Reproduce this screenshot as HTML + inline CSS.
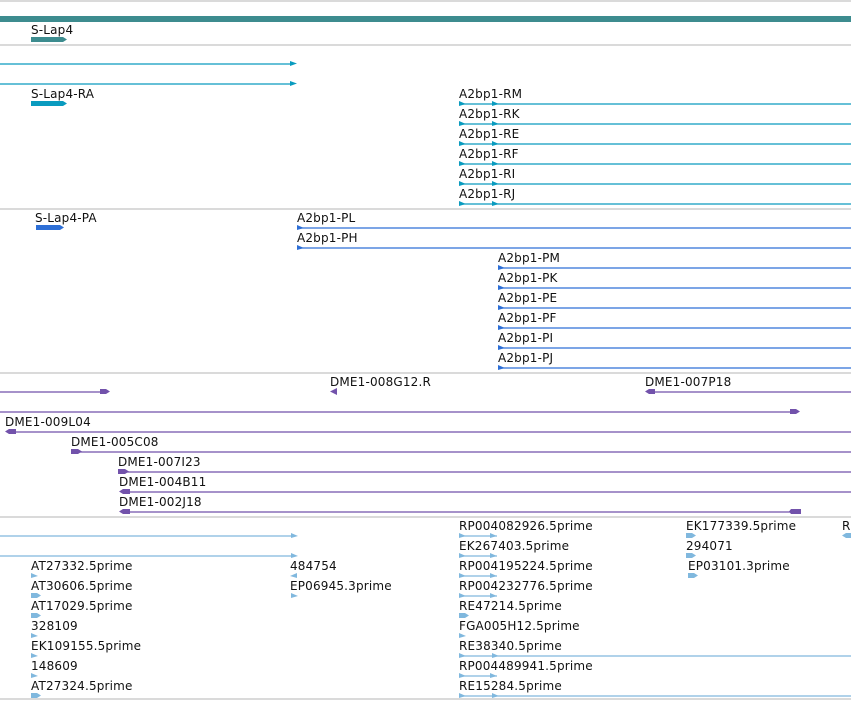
<!DOCTYPE html>
<html><head><meta charset="utf-8"><style>
html,body{margin:0;padding:0;background:#fff;}
svg{display:block;}
text{font-family:"DejaVu Sans","Liberation Sans",sans-serif;font-size:12px;fill:#111;letter-spacing:0.17px;}
</style></head><body>
<svg width="851" height="701" viewBox="0 0 851 701" xmlns="http://www.w3.org/2000/svg">
<defs>
<path id="ra" d="M0,-3 L7,0 L0,2 Z"/>
<path id="la" d="M0,0 L7,-3 L7,2 Z"/>
</defs>
<g stroke="#c3c3c3" stroke-width="1.2">
<line x1="0" y1="1" x2="851" y2="1"/><line x1="0" y1="45" x2="851" y2="45"/>
<line x1="0" y1="209" x2="851" y2="209"/><line x1="0" y1="373" x2="851" y2="373"/>
<line x1="0" y1="517" x2="851" y2="517"/><line x1="0" y1="699" x2="851" y2="699"/>
</g>
<rect x="0" y="16" width="851" height="6" fill="#3d8c8f"/>
<text x="31" y="34">S-Lap4</text>
<path d="M31,37 H63 L67,39.5 L63,42 H31 Z" fill="#3d8c8f"/>
<g stroke="#0a9bbf" stroke-width="1.2" fill="none">
<line x1="0" y1="64" x2="291" y2="64"/><line x1="0" y1="84" x2="291" y2="84"/>
<line x1="459" y1="104" x2="851" y2="104"/><line x1="459" y1="124" x2="851" y2="124"/>
<line x1="459" y1="144" x2="851" y2="144"/><line x1="459" y1="164" x2="851" y2="164"/>
<line x1="459" y1="184" x2="851" y2="184"/><line x1="459" y1="204" x2="851" y2="204"/>
</g>
<g fill="#0a9bbf">
<path d="M290,61 L297,63.5 L290,66 Z"/><path d="M290,81 L297,83.5 L290,86 Z"/>
<path d="M31,101 H63 L67,103.5 L63,106 H31 Z"/>
<use href="#ra" x="459" y="104"/><use href="#ra" x="492" y="104"/>
<use href="#ra" x="459" y="124"/><use href="#ra" x="492" y="124"/>
<use href="#ra" x="459" y="144"/><use href="#ra" x="492" y="144"/>
<use href="#ra" x="459" y="164"/><use href="#ra" x="492" y="164"/>
<use href="#ra" x="459" y="184"/><use href="#ra" x="492" y="184"/>
<use href="#ra" x="459" y="204"/><use href="#ra" x="492" y="204"/>
</g>
<text x="31" y="98">S-Lap4-RA</text>
<text x="459" y="98">A2bp1-RM</text><text x="459" y="118">A2bp1-RK</text>
<text x="459" y="138">A2bp1-RE</text><text x="459" y="158">A2bp1-RF</text>
<text x="459" y="178">A2bp1-RI</text><text x="459" y="198">A2bp1-RJ</text>
<g stroke="#2e6fd6" stroke-width="1.2">
<line x1="297" y1="228" x2="851" y2="228"/><line x1="297" y1="248" x2="851" y2="248"/>
<line x1="498" y1="268" x2="851" y2="268"/><line x1="498" y1="288" x2="851" y2="288"/>
<line x1="498" y1="308" x2="851" y2="308"/><line x1="498" y1="328" x2="851" y2="328"/>
<line x1="498" y1="348" x2="851" y2="348"/><line x1="498" y1="368" x2="851" y2="368"/>
</g>
<g fill="#2e6fd6">
<path d="M36,225 H60 L64,227.5 L60,230 H36 Z"/>
<use href="#ra" x="297" y="228"/><use href="#ra" x="297" y="248"/>
<use href="#ra" x="498" y="268"/><use href="#ra" x="498" y="288"/>
<use href="#ra" x="498" y="308"/><use href="#ra" x="498" y="328"/>
<use href="#ra" x="498" y="348"/><use href="#ra" x="498" y="368"/>
</g>
<text x="35" y="222">S-Lap4-PA</text>
<text x="297" y="222">A2bp1-PL</text><text x="297" y="242">A2bp1-PH</text>
<text x="498" y="262">A2bp1-PM</text><text x="498" y="282">A2bp1-PK</text>
<text x="498" y="302">A2bp1-PE</text><text x="498" y="322">A2bp1-PF</text>
<text x="498" y="342">A2bp1-PI</text><text x="498" y="362">A2bp1-PJ</text>
<g stroke="#7252ab" stroke-width="1.2">
<line x1="0" y1="392" x2="102" y2="392"/><line x1="650" y1="392" x2="851" y2="392"/>
<line x1="0" y1="412" x2="792" y2="412"/>
<line x1="8" y1="432" x2="851" y2="432"/><line x1="75" y1="452" x2="851" y2="452"/>
<line x1="122" y1="472" x2="851" y2="472"/><line x1="123" y1="492" x2="851" y2="492"/>
<line x1="123" y1="512" x2="792" y2="512"/>
</g>
<g fill="#7252ab">
<path d="M100,389 H106 L110,391.5 L106,394 H100 Z"/>
<path d="M330,391.5 L337,388 V395 Z"/>
<path d="M645,391.5 L649,389 H655 V394 H649 Z"/>
<path d="M790,409 H796 L800,411.5 L796,414 H790 Z"/>
<path d="M5,431.5 L9,429 H16 V434 H9 Z"/>
<path d="M71,449 H78 L82,451.5 L78,454 H71 Z"/>
<path d="M118,469 H125 L129,471.5 L125,474 H118 Z"/>
<path d="M119,491.5 L123,489 H130 V494 H123 Z"/>
<path d="M119,511.5 L123,509 H130 V514 H123 Z"/>
<path d="M791,509 H801 V514 H791 L789,511.5 Z"/>
</g>
<text x="330" y="386">DME1-008G12.R</text><text x="645" y="386">DME1-007P18</text>
<text x="5" y="426">DME1-009L04</text><text x="71" y="446">DME1-005C08</text>
<text x="118" y="466">DME1-007I23</text><text x="119" y="486">DME1-004B11</text>
<text x="119" y="506">DME1-002J18</text>
<g stroke="#80b8de" stroke-width="1.2">
<line x1="0" y1="536" x2="292" y2="536"/><line x1="0" y1="556" x2="292" y2="556"/>
<line x1="459" y1="536" x2="497" y2="536"/><line x1="459" y1="556" x2="497" y2="556"/>
<line x1="459" y1="576" x2="497" y2="576"/><line x1="459" y1="596" x2="497" y2="596"/>
<line x1="459" y1="656" x2="851" y2="656"/><line x1="459" y1="676" x2="497" y2="676"/>
<line x1="459" y1="696" x2="851" y2="696"/>
</g>
<g fill="#80b8de">
<use href="#ra" x="291" y="536"/><use href="#ra" x="291" y="556"/>
<use href="#ra" x="31" y="576"/><path d="M31,593 H37 L41,595.5 L37,598 H31 Z"/>
<path d="M31,613 H37 L41,615.5 L37,618 H31 Z"/><use href="#ra" x="31" y="636"/>
<use href="#ra" x="31" y="656"/><use href="#ra" x="31" y="676"/>
<path d="M31,693 H37 L41,695.5 L37,698 H31 Z"/>
<use href="#la" x="290" y="576"/><use href="#ra" x="291" y="596"/>
<use href="#ra" x="459" y="536"/><use href="#ra" x="490" y="536"/>
<use href="#ra" x="459" y="556"/><use href="#ra" x="490" y="556"/>
<use href="#ra" x="459" y="576"/><use href="#ra" x="490" y="576"/>
<use href="#ra" x="459" y="596"/><use href="#ra" x="490" y="596"/>
<path d="M459,613 H465 L469,615.5 L465,618 H459 Z"/><use href="#ra" x="459" y="636"/>
<use href="#ra" x="459" y="656"/><use href="#ra" x="492" y="656"/>
<use href="#ra" x="459" y="676"/><use href="#ra" x="490" y="676"/>
<use href="#ra" x="459" y="696"/><use href="#ra" x="492" y="696"/>
<path d="M686,533 H692 L696,535.5 L692,538 H686 Z"/>
<path d="M686,553 H692 L696,555.5 L692,558 H686 Z"/>
<path d="M688,573 H694 L698,575.5 L694,578 H688 Z"/>
<path d="M842,535.5 L846,533 H851 V538 H846 Z"/>
</g>
<text x="31" y="570">AT27332.5prime</text><text x="31" y="590">AT30606.5prime</text>
<text x="31" y="610">AT17029.5prime</text><text x="31" y="630">328109</text>
<text x="31" y="650">EK109155.5prime</text><text x="31" y="670">148609</text>
<text x="31" y="690">AT27324.5prime</text>
<text x="290" y="570">484754</text><text x="290" y="590">EP06945.3prime</text>
<text x="459" y="530">RP004082926.5prime</text><text x="459" y="550">EK267403.5prime</text>
<text x="459" y="570">RP004195224.5prime</text><text x="459" y="590">RP004232776.5prime</text>
<text x="459" y="610">RE47214.5prime</text><text x="459" y="630">FGA005H12.5prime</text>
<text x="459" y="650">RE38340.5prime</text><text x="459" y="670">RP004489941.5prime</text>
<text x="459" y="690">RE15284.5prime</text>
<text x="686" y="530">EK177339.5prime</text><text x="686" y="550">294071</text>
<text x="688" y="570">EP03101.3prime</text><text x="842" y="530">R</text>
</svg>
</body></html>
